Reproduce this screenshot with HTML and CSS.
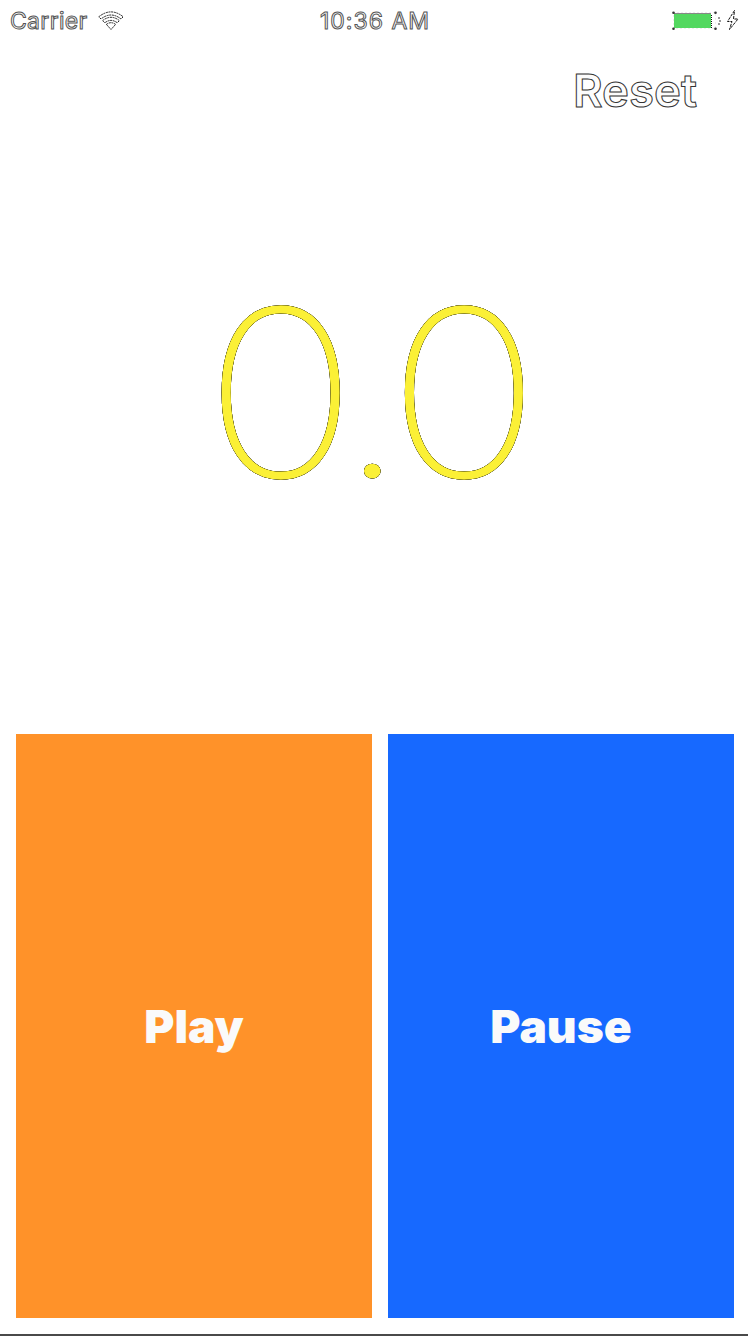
FILE: index.html
```html
<!DOCTYPE html>
<html lang="en">
<head>
<meta charset="utf-8">
<title>Stopwatch</title>
<link rel="stylesheet" href="styles.css">
</head>
<body>
<main class="screen">
  <header class="status">
    <div class="status-left">
      <span class="carrier">Carrier</span>
      <svg class="wifi" viewBox="0 0 26 20" width="26" height="20">
        <g fill="none" stroke="#222" stroke-width="1" stroke-dasharray="2 0.7">
          <path d="M0.8 5.8Q13 -4 25.2 5.8L23 8Q13 0 3 8Z"/>
          <path d="M4.6 9.6Q13 3 21.4 9.6L19.2 11.8Q13 7 6.8 11.8Z"/>
          <path d="M8.4 13.4Q13 10 17.6 13.4L13 18.5Z"/>
        </g>
      </svg>
    </div>
    <span class="clock">10:36 AM</span>
    <svg class="battery" viewBox="0 0 68 22" width="68" height="22">
      <rect x="1.5" y="2.5" width="42" height="16" fill="none" stroke="#ddd" stroke-width="1" stroke-dasharray="1 3"/>
      <rect x="2" y="3" width="37" height="15" fill="#53d860"/>
      <path d="M2 3.5H39" stroke="#888"/>
      <path d="M39.5 5V18" stroke="#111" stroke-dasharray="1 1"/>
      <g fill="#333"><circle cx="1.5" cy="2.7" r="1.3"/><circle cx="1.5" cy="18.7" r="1.3"/><circle cx="43.5" cy="2.7" r="1.3"/><circle cx="43.5" cy="18.7" r="1.3"/></g>
      <path d="M46 8H48V14H46" fill="none" stroke="#333" stroke-dasharray="2 2"/>
      <path d="M62.5 0.5L55.5 11.5H60L57.5 19.5L66 9H61.5Z" fill="#fff" stroke="#111" stroke-width="1" stroke-dasharray="3 1"/>
    </svg>
  </header>
  <div class="toolbar"><button class="reset">Reset</button></div>
  <div class="display"><span class="time">0.0</span></div>
  <div class="controls">
    <button class="control play"><span>Play</span></button>
    <button class="control pause"><span>Pause</span></button>
  </div>
  <div class="edge"></div>
</main>
</body>
</html>
```
FILE: styles.css
```css
* { box-sizing: border-box; }
body { margin: 0; background: #fff; font-family: Inter, "Liberation Sans", sans-serif; }
button { border: 0; padding: 0; background: none; font: inherit; }
.screen { width: 748px; height: 1336px; display: flex; flex-direction: column; background: #fff; overflow: hidden; }
.status { height: 41px; display: grid; grid-template-columns: 1fr auto 1fr; align-items: center; padding: 1px 10px 0; font-size: 23px; color: #fff; -webkit-text-stroke: 1px #555; }
.status-left { display: flex; align-items: center; gap: 10px; }
.carrier { letter-spacing: 0.3px; }
.clock { letter-spacing: 1px; padding-left: 2px; }
.battery { justify-self: end; margin: -1px -2px 0 0; }
.toolbar { height: 99px; display: flex; justify-content: flex-end; align-items: center; padding: 0 51px 0 0; }
.reset { font-size: 45.5px; font-weight: 600; color: #fcfcfc; -webkit-text-stroke: 1px #333; }
.display { height: 594px; display: flex; justify-content: center; padding-top: 110px; }
.time { font-size: 229.5px; line-height: 286px; font-weight: 100; letter-spacing: -11.2px; margin-right: 15px; transform: scaleX(1.12); color: #fbf036; -webkit-text-stroke: 3px #fbf036; filter: drop-shadow(0 0 0.4px #000) drop-shadow(0 0 0.4px #000); }
.controls { height: 584px; display: grid; grid-template-columns: 356px 346px; gap: 16px; padding-left: 16px; }
.control { display: flex; align-items: center; justify-content: center; font-size: 46px; font-weight: 870; color: #fafafa; }
.play { background: #ff9229; }
.pause { background: #1769ff; }
.edge { height: 2px; margin-top: 16px; background: #4a4a4a; }
```
